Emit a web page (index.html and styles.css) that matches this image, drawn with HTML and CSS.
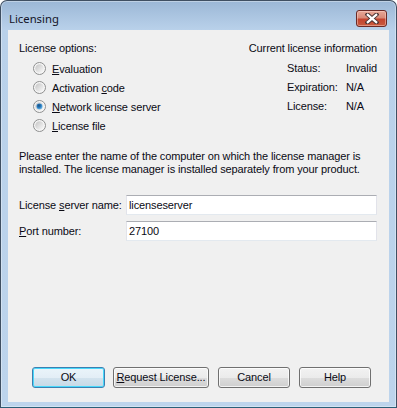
FILE: index.html
```html
<!DOCTYPE html>
<html>
<head>
<meta charset="utf-8">
<link rel="stylesheet" href="styles.css">
</head>
<body>
<div class="window">
  <div class="titlebar">
    <span class="title">Licensing</span>
    <span class="close">
      <svg width="14" height="11" viewBox="0 0 14 11">
        <path d="M2.5 1.5 L11.5 9.5 M11.5 1.5 L2.5 9.5" stroke="#4a3434" stroke-width="4.2" stroke-linecap="square"/>
        <path d="M2.8 1.8 L11.2 9.2 M11.2 1.8 L2.8 9.2" stroke="#ffffff" stroke-width="2.2" stroke-linecap="square"/>
      </svg>
    </span>
  </div>
  <div class="client">
    <div class="top">
      <div class="options">
        <div class="label">License options:</div>
        <div class="radio">
          <svg width="13" height="13" viewBox="0 0 13 13"><defs><linearGradient id="r1" x1="0" y1="0" x2="1" y2="1"><stop offset="0" stop-color="#c4c4c4"/><stop offset="1" stop-color="#fbfbfb"/></linearGradient></defs><circle cx="6.5" cy="6.5" r="6" fill="#f6f6f6" stroke="#8e8f8f"/><circle cx="6.5" cy="6.5" r="4.3" fill="url(#r1)"/></svg>
          <span><u>E</u>valuation</span>
        </div>
        <div class="radio">
          <svg width="13" height="13" viewBox="0 0 13 13"><defs><linearGradient id="r2" x1="0" y1="0" x2="1" y2="1"><stop offset="0" stop-color="#c4c4c4"/><stop offset="1" stop-color="#fbfbfb"/></linearGradient></defs><circle cx="6.5" cy="6.5" r="6" fill="#f6f6f6" stroke="#8e8f8f"/><circle cx="6.5" cy="6.5" r="4.3" fill="url(#r2)"/></svg>
          <span>Activation <u>c</u>ode</span>
        </div>
        <div class="radio">
          <svg width="13" height="13" viewBox="0 0 13 13"><defs><linearGradient id="r3" x1="0" y1="0" x2="1" y2="1"><stop offset="0" stop-color="#c4c4c4"/><stop offset="1" stop-color="#fbfbfb"/></linearGradient><radialGradient id="d3" cx="0.4" cy="0.35" r="0.7"><stop offset="0" stop-color="#1b4f80"/><stop offset="0.5" stop-color="#2a7cc0"/><stop offset="1" stop-color="#7fc6f0"/></radialGradient></defs><circle cx="6.5" cy="6.5" r="6" fill="#f6f6f6" stroke="#8e8f8f"/><circle cx="6.5" cy="6.5" r="4.3" fill="url(#r3)"/><circle cx="6.5" cy="6.5" r="3" fill="url(#d3)"/></svg>
          <span><u>N</u>etwork license server</span>
        </div>
        <div class="radio">
          <svg width="13" height="13" viewBox="0 0 13 13"><defs><linearGradient id="r4" x1="0" y1="0" x2="1" y2="1"><stop offset="0" stop-color="#c4c4c4"/><stop offset="1" stop-color="#fbfbfb"/></linearGradient></defs><circle cx="6.5" cy="6.5" r="6" fill="#f6f6f6" stroke="#8e8f8f"/><circle cx="6.5" cy="6.5" r="4.3" fill="url(#r4)"/></svg>
          <span><u>L</u>icense file</span>
        </div>
      </div>
      <div class="info">
        <div class="info-head">Current license information</div>
        <div class="info-grid">
          <span>Status:</span><span>Invalid</span>
          <span>Expiration:</span><span>N/A</span>
          <span>License:</span><span>N/A</span>
        </div>
      </div>
    </div>
    <p class="note">Please enter the name of the computer on which the license manager is<br>installed. The license manager is installed separately from your product.</p>
    <div class="fields">
      <span class="flabel">License <u>s</u>erver name:</span>
      <div class="input">licenseserver</div>
      <span class="flabel"><u>P</u>ort number:</span>
      <div class="input">27100</div>
    </div>
    <div class="buttons">
      <div class="btn btn-default w-ok">OK</div>
      <div class="btn w-req"><u>R</u>equest License...</div>
      <div class="btn w-std">Cancel</div>
      <div class="btn w-std">Help</div>
    </div>
  </div>
</div>
</body>
</html>
```

FILE: styles.css
```css
html, body {
  margin: 0;
  padding: 0;
  background: #ffffff;
}

.window {
  width: 397px;
  height: 408px;
  box-sizing: border-box;
  border: 1px solid #3f4f62;
  border-bottom-color: #2a5f78;
  border-radius: 7px 7px 0 0;
  background: linear-gradient(#9bb7d6 0px, #aac4e0 14px, #b9d1ea 29px, #bdd4ec 100%);
  box-shadow: inset 0 0 0 1px rgba(255, 255, 255, 0.35);
  padding: 0 7px 5px 7px;
  display: flex;
  flex-direction: column;
  font-family: "Liberation Sans", Arial, sans-serif;
  font-size: 11px;
  letter-spacing: -0.12px;
  color: #0a0a14;
}

.titlebar {
  height: 29px;
  box-sizing: border-box;
  padding-top: 9px;
  display: flex;
  align-items: flex-start;
  justify-content: space-between;
}

.title {
  font-family: "Noto Sans", "Open Sans", sans-serif;
  font-size: 11.3px;
  letter-spacing: 0;
  line-height: 18px;
  color: #141428;
  padding-left: 1px;
}

.close {
  width: 31px;
  height: 17px;
  box-sizing: border-box;
  margin-right: 2px;
  border: 1px solid #6b2a26;
  border-radius: 3px;
  background: linear-gradient(#e8a898 0%, #d98a78 45%, #c4442f 55%, #c85a3e 100%);
  box-shadow: inset 0 0 0 1px rgba(255, 220, 210, 0.45);
  display: flex;
  align-items: center;
  justify-content: center;
}

.client {
  flex: 1;
  background: #f0f0f0;
  padding: 12px 12px 14px 11px;
  display: flex;
  flex-direction: column;
}

.top {
  display: flex;
  justify-content: space-between;
}

.label {
  line-height: 13px;
  margin-bottom: 4px;
}

.radio {
  height: 19px;
  display: flex;
  align-items: center;
  padding-left: 14px;
  gap: 6px;
}

.radio svg {
  flex: none;
}

.info {
  display: flex;
  flex-direction: column;
  align-items: flex-end;
}

.info-head {
  line-height: 13px;
}

.info-grid {
  width: 90px;
  margin-top: 3px;
  display: grid;
  grid-template-columns: 59px 1fr;
  grid-auto-rows: 19px;
  align-items: center;
}

.note {
  margin: 15px 0 0 0;
  line-height: 13px;
}

.fields {
  margin-top: 19px;
  display: grid;
  grid-template-columns: 107px 1fr;
  grid-auto-rows: 20px;
  row-gap: 6px;
  align-items: center;
}

.input {
  height: 20px;
  box-sizing: border-box;
  background: #ffffff;
  border: 1px solid #e2e3ea;
  border-top-color: #abadb3;
  border-bottom-color: #e3e9ef;
  padding-left: 2px;
  line-height: 18px;
}

.buttons {
  margin-top: auto;
  margin-left: 13px;
  display: flex;
}

.btn {
  height: 21px;
  box-sizing: border-box;
  border: 1px solid #707070;
  border-radius: 3px;
  background: linear-gradient(#f2f2f2 0%, #ebebeb 50%, #dddddd 51%, #cfcfcf 100%);
  box-shadow: inset 0 0 0 1px rgba(255, 255, 255, 0.75);
  display: flex;
  align-items: center;
  justify-content: center;
  line-height: 13px;
}

.btn-default {
  border-color: #3c7fb1;
  box-shadow: inset 0 0 0 1px #48d8fb;
  background: linear-gradient(#eaf4fa 0%, #e3eef6 50%, #d3e3ee 51%, #c6d9e6 100%);
}

.w-ok { width: 73px; margin-right: 8px; }
.w-req { width: 96px; margin-right: 9px; }
.w-std { width: 72px; margin-right: 9px; }
.w-std:last-child { margin-right: 0; }
```
